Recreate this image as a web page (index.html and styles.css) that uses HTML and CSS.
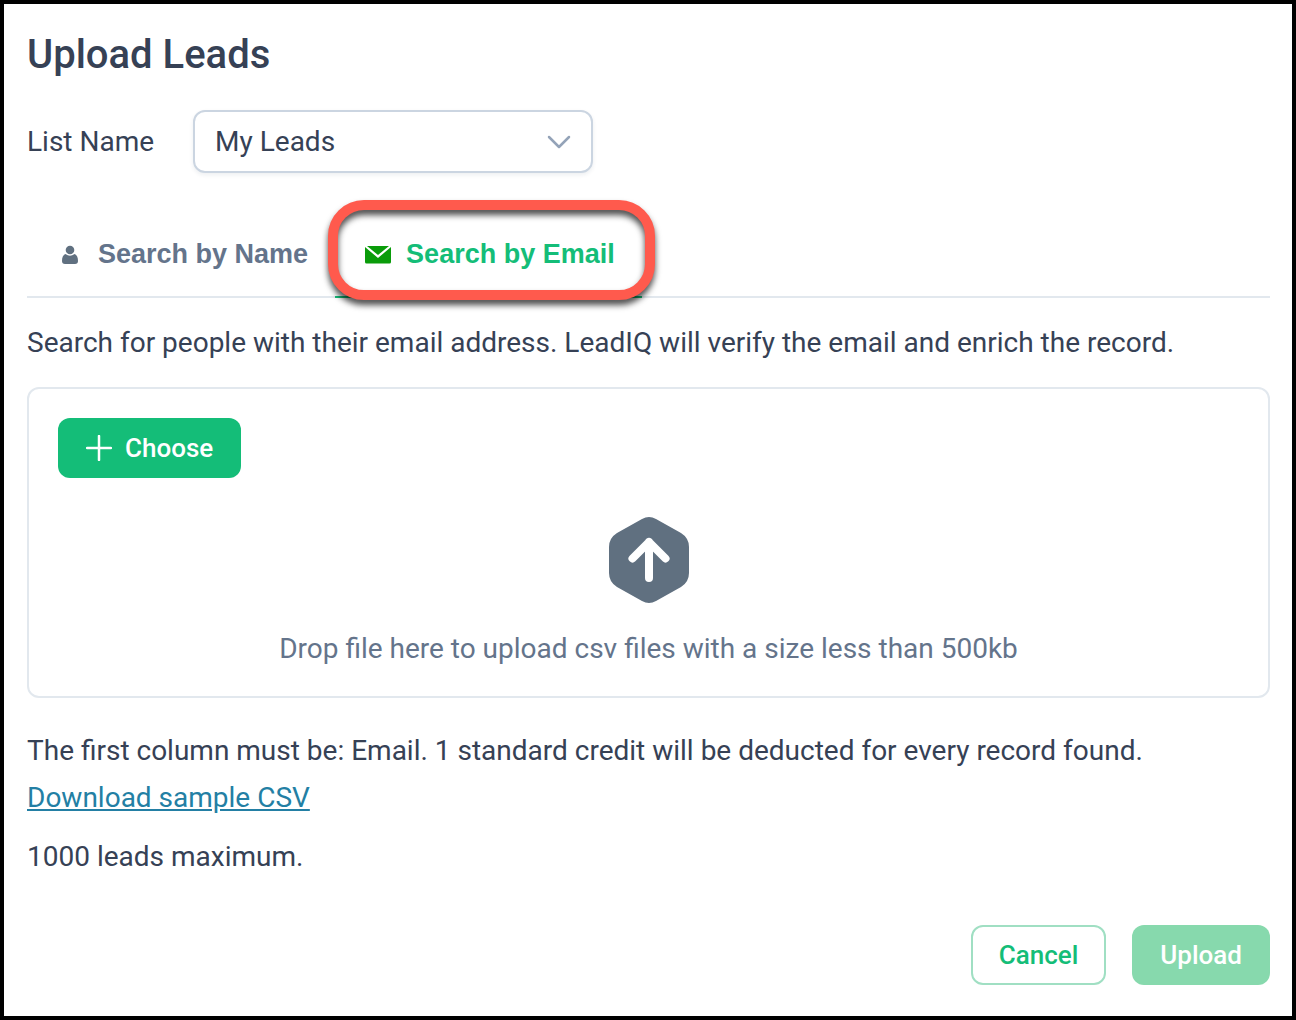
FILE: index.html
```
<!DOCTYPE html>
<html lang="en">
<head>
  <meta charset="utf-8">
  <title>Upload Leads</title>
  <link rel="stylesheet" href="styles.css">
</head>
<body>
  <main class="dialog">
    <h1 class="dialog-title">Upload Leads</h1>

    <div class="list-row">
      <label for="listName">List Name</label>
      <div class="select-wrap">
        <select id="listName" class="list-select">
          <option>My Leads</option>
        </select>
        <svg class="select-arrow" viewBox="0 0 24 14" aria-hidden="true">
          <path d="M2 2l10 10L22 2"/>
        </svg>
      </div>
    </div>

    <div class="tabs" role="tablist">
      <button type="button" class="tab" role="tab" aria-selected="false">
        <svg class="tab-icon" viewBox="0 0 26 26" aria-hidden="true">
          <circle cx="13" cy="8" r="4.300"/>
          <path d="M8.500 12Q13 15.500 17.500 12C20 13 21 15.500 21 19Q21 22 18 22H8Q5 22 5 19C5 15.500 6 13 8.500 12z"/>
        </svg>
        Search by Name
      </button>
      <button type="button" class="tab active" role="tab" aria-selected="true">
        <svg class="tab-icon mail" viewBox="0 0 26 26" aria-hidden="true">
          <path d="M2 4h22l-11 9z"/>
          <path d="M0 5l13 11L26 5v15q0 1.500-1.500 1.500h-23Q0 21.500 0 20z"/>
        </svg>
        Search by Email
        <span class="highlight"></span>
      </button>
    </div>

    <p class="intro">Search for people with their email address. LeadIQ will verify the email and enrich the record.</p>

    <section class="upload-box">
      <button type="button" class="btn btn-primary btn-choose">
        <svg class="plus" viewBox="0 0 26 26" aria-hidden="true">
          <path d="M13 1v24M1 13h24"/>
        </svg>
        Choose
      </button>
      <div class="drop-area">
        <svg class="drop-icon" viewBox="0 0 80 88" aria-hidden="true">
          <path class="hex" d="M33 3Q40-1 47 3L72 17Q80 22 80 31V57Q80 66 72 71L47 85Q40 89 33 85L8 71Q0 66 0 57V31Q0 22 8 17z"/>
          <path class="arrow" d="M40 62V26M23.500 42.500L40 26l16.500 16.500"/>
        </svg>
        <p>Drop file here to upload csv files with a size less than 500kb</p>
      </div>
    </section>

    <div class="notes">
      <p>The first column must be: Email. 1 standard credit will be deducted for every record found.</p>
      <a href="#">Download sample CSV</a>
      <p class="limit">1000 leads maximum.</p>
    </div>

    <div class="dialog-footer">
      <button type="button" class="btn btn-outline">Cancel</button>
      <button type="submit" class="btn btn-primary" disabled>Upload</button>
    </div>
  </main>
</body>
</html>
```
FILE: styles.css
```
:root {
  --text: #364155;
  --text-light: #64748b;
  --green: #14bd78;
  --green-light: #87d9ad;
  --border: #e2e8ee;
  --red: #ff5a4d;
}

* {
  box-sizing: border-box;
}

body {
  margin: 0;
  background: #fff;
  color: var(--text);
  font-family: Roboto, "Liberation Sans", sans-serif;
  font-size: 28px;
  line-height: 32px;
}

p {
  margin: 0;
}

.dialog {
  min-height: 100vh;
  padding: 26px 22px 30px 23px;
  border: 4px solid #000;
}

.dialog-title {
  margin: 0 0 30px;
  font-size: 40px;
  font-weight: 500;
  line-height: 50px;
}

.list-row {
  display: flex;
  align-items: center;
  gap: 39px;
  margin-bottom: 40px;
}

.select-wrap {
  position: relative;
  width: 400px;
}

.list-select {
  appearance: none;
  display: block;
  width: 100%;
  height: 63px;
  padding: 0 20px;
  border: 2px solid #cbd5e1;
  border-radius: 12px;
  background: #fff;
  box-shadow: 0 2px 4px rgba(30, 50, 80, 0.08);
  color: var(--text);
  font: inherit;
}

.select-arrow {
  position: absolute;
  top: 25px;
  right: 22px;
  width: 24px;
  height: 14px;
  fill: none;
  stroke: #94a3b8;
  stroke-width: 2.5;
  stroke-linecap: round;
  stroke-linejoin: round;
  pointer-events: none;
}

.tabs {
  display: flex;
  border-bottom: 2px solid var(--border);
}

.tab {
  position: relative;
  display: flex;
  align-items: center;
  gap: 15px;
  height: 85px;
  margin-bottom: -2px;
  padding: 0 27px 0 30px;
  border: none;
  border-bottom: 2px solid transparent;
  background: none;
  color: var(--text-light);
  font-family: "Liberation Sans", Arial, sans-serif;
  font-size: 27px;
  font-weight: 700;
  white-space: nowrap;
}

.tab.active {
  border-bottom-color: var(--green);
  color: var(--green);
}

.tab-icon {
  width: 26px;
  height: 26px;
  fill: #607080;
}

.tab-icon.mail {
  fill: #0a9c0a;
}

/* rounded callout over the active tab */
.highlight {
  position: absolute;
  inset: -13px -13px -4px -7px;
  border: 10px solid var(--red);
  border-radius: 36px;
  filter: drop-shadow(0 5px 3px rgba(0, 0, 0, 0.7));
  pointer-events: none;
}

.intro {
  margin: 29px 0 28px;
}

.upload-box {
  padding: 29px 29px 31px;
  border: 2px solid var(--border);
  border-radius: 12px;
}

.btn {
  height: 60px;
  padding: 0 26px;
  border: 2px solid transparent;
  border-radius: 12px;
  font-family: inherit;
  font-size: 26px;
  font-weight: 500;
}

.btn-primary {
  background: var(--green);
  color: #fff;
}

.btn-primary:disabled {
  background: var(--green-light);
}

.btn-outline {
  border-color: #a0dfc3;
  background: #fff;
  color: var(--green);
}

.btn-choose {
  display: flex;
  align-items: center;
  gap: 13px;
}

.plus {
  width: 26px;
  height: 26px;
  fill: none;
  stroke: #fff;
  stroke-width: 2.5;
  stroke-linecap: round;
}

.drop-area {
  display: flex;
  flex-direction: column;
  align-items: center;
  gap: 29px;
  margin-top: 38px;
  color: var(--text-light);
  text-align: center;
}

.drop-icon {
  width: 80px;
  height: 88px;
}

.hex {
  fill: #607080;
}

.arrow {
  fill: none;
  stroke: #fff;
  stroke-width: 8;
  stroke-linecap: round;
  stroke-linejoin: round;
}

.notes {
  margin-top: 37px;
}

.notes a {
  display: inline-block;
  margin: 15px 0 27px;
  color: #237fa4;
}

.dialog-footer {
  display: flex;
  justify-content: flex-end;
  gap: 26px;
  margin-top: 52px;
}
```
